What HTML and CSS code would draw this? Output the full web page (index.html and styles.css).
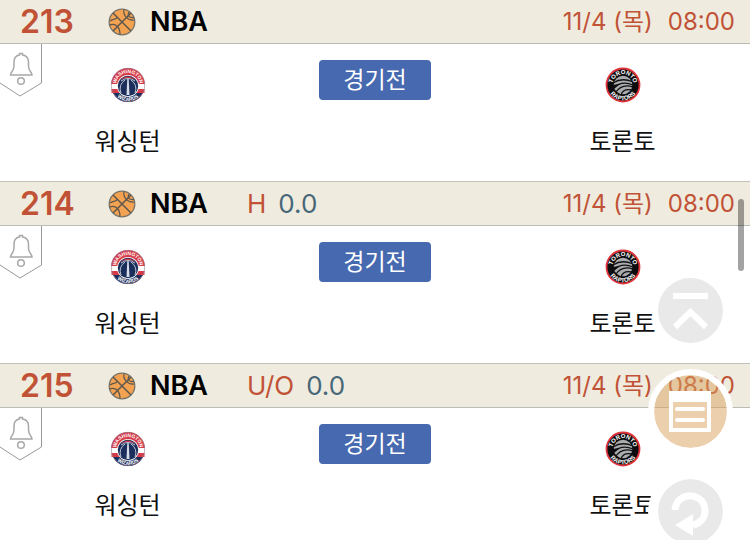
FILE: index.html
```
<!DOCTYPE html>
<html lang="ko">
<head>
    <meta charset="UTF-8">
    <meta name="viewport" content="width=device-width, initial-scale=1.0">
    <title>경기 목록</title>
    <link rel="stylesheet" href="styles.css">
</head>
<body>
    <svg class="defs" aria-hidden="true">
        <symbol id="ball" viewBox="0 0 28 28">
            <circle cx="14" cy="14" r="12.8" fill="#f2a250" stroke="#77736a" stroke-width="1.3"/>
            <g fill="none" stroke="#5c574f" stroke-width="1.2">
                <path d="M5 5L23 23M23 5L5 23" stroke-width="1.5"/>
                <path d="M16 1.500C15 7 19 13 26.500 12M21 4C19 8 21 10 26 9.500M1.500 17C8 15 12 19 12 26.500M2 13C6 10 9 12 9 9"/>
            </g>
        </symbol>
        <symbol id="bell" viewBox="0 0 43 54">
            <path d="M41.500 0V39L20 52L0 39" fill="#fff" stroke="#999" stroke-width="1"/>
            <g fill="none" stroke="#a8a8a8" stroke-width="1.500">
                <path d="M10.500 31H32C32 28 28.500 27 28.500 22V18C28.500 14 26 11.500 22.500 11V9.500H19.500V11C16 11.500 14 14 14 18V22C14 27 10.500 28 10.500 31Z"/>
                <circle cx="21" cy="37" r="3.300"/>
            </g>
        </symbol>
        <symbol id="wizards" viewBox="0 0 36 36">
            <circle cx="18" cy="18" r="17" fill="#d63a48"/>
            <path d="M1 17H35V22H1Z" fill="#fff"/>
            <path d="M1.500 22H34.500V26H1.500Z" fill="#d63a48"/>
            <path d="M3 26A17 17 0 0 0 33 26Z" fill="#1c2f5c"/>
            <circle cx="18" cy="18" r="16.700" fill="none" stroke="#8d7f96" stroke-width="0.600"/>
            <circle cx="18" cy="19" r="11" fill="#fff"/>
            <circle cx="18" cy="19" r="10.200" fill="#1c2f5c"/>
            <path d="M10 13Q18 6 26 13Q18 9 10 13Z" fill="#d63a48"/>
            <path d="M15 13Q8 18 11 26M21 13Q28 18 25 26M11 14Q18 9 25 14" fill="none" stroke="#bdc6d5" stroke-width="1"/>
            <path d="M17.300 12H18.700L19.500 28H16.500Z" fill="#d6dce8"/>
            <path id="arc-wt" d="M6 18A12 12 0 0 1 30 18" fill="none"/>
            <path id="arc-wb" d="M2 18A16 16 0 0 0 34 18" fill="none"/>
            <text class="logo-text" font-size="5"><textPath href="#arc-wt" startOffset="50%" text-anchor="middle">WASHINGTON</textPath></text>
            <text class="logo-text" font-size="5"><textPath href="#arc-wb" startOffset="50%" text-anchor="middle">WIZARDS</textPath></text>
        </symbol>
        <symbol id="raptors" viewBox="0 0 36 36">
            <circle cx="18" cy="18" r="16.500" fill="#0d0d0f" stroke="#e0343c" stroke-width="1.800"/>
            <circle cx="18" cy="18" r="9.300" fill="#a9abae"/>
            <g fill="none" stroke="#111" stroke-width="1.300">
                <path d="M8 16Q17 10 28 15M8 21Q17 13 28 18M10 26Q17 16 28 20M16 28Q18 21 27 23"/>
            </g>
            <path d="M7 18L15 17L9 22Z" fill="#0d0d0f"/>
            <path id="arc-rt" d="M7.300 18A10.700 10.700 0 0 1 28.700 18" fill="none"/>
            <path id="arc-rb" d="M2.800 18A15.200 15.200 0 0 0 33.200 18" fill="none"/>
            <text class="logo-text" font-size="6"><textPath href="#arc-rt" startOffset="50%" text-anchor="middle">TORONTO</textPath></text>
            <text class="logo-text" font-size="6"><textPath href="#arc-rb" startOffset="50%" text-anchor="middle">RAPTORS</textPath></text>
        </symbol>
    </svg>

    <main class="games">
        <article class="game">
            <header class="game-head">
                <span class="number">213</span>
                <svg class="ball"><use href="#ball"/></svg>
                <span class="league">NBA</span>
                <time class="date"><span>11/4 (목)</span><span>08:00</span></time>
            </header>
            <div class="game-body">
                <button type="button" class="alarm" aria-label="알림"><svg><use href="#bell"/></svg></button>
                <div class="team">
                    <svg class="logo"><use href="#wizards"/></svg>
                    <span>워싱턴</span>
                </div>
                <button type="button" class="status">경기전</button>
                <div class="team">
                    <svg class="logo"><use href="#raptors"/></svg>
                    <span>토론토</span>
                </div>
            </div>
        </article>

        <article class="game">
            <header class="game-head">
                <span class="number">214</span>
                <svg class="ball"><use href="#ball"/></svg>
                <span class="league">NBA</span>
                <span class="type">H</span>
                <span class="line">0.0</span>
                <time class="date"><span>11/4 (목)</span><span>08:00</span></time>
            </header>
            <div class="game-body">
                <button type="button" class="alarm" aria-label="알림"><svg><use href="#bell"/></svg></button>
                <div class="team">
                    <svg class="logo"><use href="#wizards"/></svg>
                    <span>워싱턴</span>
                </div>
                <button type="button" class="status">경기전</button>
                <div class="team">
                    <svg class="logo"><use href="#raptors"/></svg>
                    <span>토론토</span>
                </div>
            </div>
        </article>

        <article class="game">
            <header class="game-head">
                <span class="number">215</span>
                <svg class="ball"><use href="#ball"/></svg>
                <span class="league">NBA</span>
                <span class="type">U/O</span>
                <span class="line">0.0</span>
                <time class="date"><span>11/4 (목)</span><span>08:00</span></time>
            </header>
            <div class="game-body">
                <button type="button" class="alarm" aria-label="알림"><svg><use href="#bell"/></svg></button>
                <div class="team">
                    <svg class="logo"><use href="#wizards"/></svg>
                    <span>워싱턴</span>
                </div>
                <button type="button" class="status">경기전</button>
                <div class="team">
                    <svg class="logo"><use href="#raptors"/></svg>
                    <span>토론토</span>
                </div>
            </div>
        </article>
    </main>

    <nav class="floating">
        <button type="button" class="float-btn top" aria-label="맨 위로">
            <svg viewBox="0 0 65 65" fill="none" stroke="#fff" stroke-width="6">
                <path d="M15 18H50M17 49L32.500 34L48 49"/>
            </svg>
        </button>
        <button type="button" class="float-btn cart" aria-label="목록">
            <svg viewBox="0 0 73 73" fill="none" stroke="#fff">
                <path d="M15 16H57V57H15Z" fill="#fff" stroke="none"/>
                <path d="M19 27H53V53H19Z" fill="#ecd0ae" stroke="none"/>
                <path d="M23 34H49M23 45H49" stroke-width="4" stroke-linecap="round"/>
            </svg>
        </button>
        <button type="button" class="float-btn refresh" aria-label="새로고침">
            <svg viewBox="0 0 65 65" fill="none" stroke="#fff" stroke-width="7">
                <path d="M17 31C18 12 47 12 47 32C47 38 43 44 35 46"/>
                <path d="M17 46L35 35V57Z" fill="#fff" stroke="none"/>
            </svg>
        </button>
    </nav>
    <div class="scroll-thumb"></div>
</body>
</html>
```
FILE: styles.css
```
* {
    box-sizing: border-box;
}

html {
    scrollbar-width: none;
}

body {
    margin: 0;
    background-color: #fff;
    color: #111;
    font-family: Inter, "Noto Sans CJK KR", sans-serif;
}

button {
    border: none;
    padding: 0;
    font-family: inherit;
    cursor: pointer;
}

svg {
    display: block;
}

.defs {
    position: absolute;
    width: 0;
    height: 0;
}

.game-head {
    display: flex;
    align-items: center;
    height: 45px;
    padding: 0 15px 0 20px;
    background-color: #efecdf;
    border-top: 1px solid #c3c2ba;
    border-bottom: 1px solid #bbbcb6;
    line-height: 40px;
}

.game:first-child .game-head {
    height: 44px;
    border-top: none;
}

.number {
    width: 88px;
    color: #c15236;
    font-size: 32px;
    font-weight: 600;
}

.ball {
    width: 28px;
    height: 28px;
}

.league {
    width: 97px;
    margin-left: 14px;
    color: #000;
    font-size: 27px;
    font-weight: 600;
}

.type,
.line {
    font-size: 26px;
}

.type {
    margin-right: 12px;
    color: #c15236;
}

.line {
    color: #476779;
}

.date {
    display: flex;
    gap: 15px;
    margin-left: auto;
    color: #c15236;
    font-size: 24px;
}

.game-body {
    position: relative;
    display: grid;
    grid-template-columns: 34% 1fr 34%;
    justify-items: center;
    align-items: start;
    height: 137px;
    padding-top: 16px;
}

.alarm {
    position: absolute;
    top: 0;
    left: 0;
    background: none;
}

.alarm svg {
    width: 43px;
    height: 54px;
}

.team {
    display: flex;
    flex-direction: column;
    align-items: center;
    gap: 19px;
    padding-top: 7px;
    font-size: 24px;
    line-height: 40px;
}

.logo {
    width: 36px;
    height: 36px;
}

.logo-text {
    fill: #fff;
    font-family: "Liberation Sans", sans-serif;
    font-weight: bold;
}

.status {
    width: 112px;
    height: 40px;
    border-radius: 4px;
    background-color: #4769b0;
    color: #fff;
    font-size: 23px;
    line-height: 40px;
}

.floating {
    position: fixed;
    right: 17px;
    bottom: -14px;
    display: flex;
    flex-direction: column;
    align-items: center;
}

.float-btn {
    border-radius: 50%;
    background-color: #e9e9e9;
    background-clip: padding-box;
}

.top {
    width: 65px;
    height: 65px;
    margin-bottom: 26px;
}

.cart {
    width: 85px;
    height: 85px;
    margin-bottom: 15px;
    border: 6px solid #fff;
    background-color: rgba(217, 161, 93, 0.5);
}

.refresh {
    width: 85px;
    height: 85px;
    border: 10px solid #fff;
}

.scroll-thumb {
    position: fixed;
    top: 199px;
    right: 6px;
    width: 6px;
    height: 72px;
    border-radius: 3px;
    background-color: rgba(0, 0, 0, 0.36);
}
```
